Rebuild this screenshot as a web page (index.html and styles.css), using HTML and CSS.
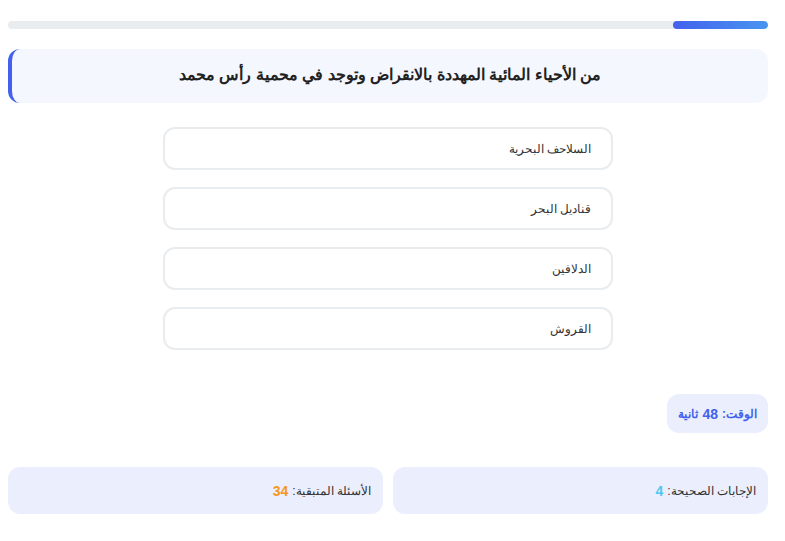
FILE: index.html
```html
<!DOCTYPE html>
<html lang="ar" dir="rtl">
<head>
<meta charset="utf-8">
<title>اختبار</title>
<link rel="stylesheet" href="styles.css">
</head>
<body>
<div class="quiz">
  <div class="progress"><div class="progress-fill" style="width:12.5%"></div></div>
  <div class="question">من الأحياء المائية المهددة بالانقراض وتوجد في محمية رأس محمد</div>
  <div class="options">
    <div class="option">السلاحف البحرية</div>
    <div class="option">قناديل البحر</div>
    <div class="option">الدلافين</div>
    <div class="option">القروش</div>
  </div>
  <div class="timer-row">
    <div class="timer">الوقت: <span>48</span> ثانية</div>
  </div>
  <div class="stats">
    <div class="stat">الإجابات الصحيحة: <span class="correct">4</span></div>
    <div class="stat">الأسئلة المتبقية: <span class="remaining">34</span></div>
  </div>
</div>
</body>
</html>
```

FILE: styles.css
```css
html, body {
  margin: 0;
  padding: 0;
  background: #ffffff;
}
body {
  font-family: "Liberation Sans", sans-serif;
  color: #333333;
}
.quiz {
  margin: 0 17px 0 8px;
  padding-top: 21px;
}
.progress {
  height: 8px;
  border-radius: 4px;
  background: #e9ecef;
  overflow: hidden;
  margin-bottom: 20px;
  direction: ltr;
  display: flex;
  justify-content: flex-end;
}
.progress-fill {
  height: 100%;
  border-radius: 4px;
  background: linear-gradient(to right, #4361ee, #4895ef);
}
.question {
  height: 54px;
  box-sizing: border-box;
  padding-bottom: 3px;
  display: flex;
  align-items: center;
  justify-content: center;
  background: #f4f7fe;
  border-left: 4px solid #4361ee;
  border-radius: 12px;
  font-size: 16px;
  font-weight: bold;
  color: #222222;
  margin-bottom: 24px;
}
.options {
  width: 450px;
  margin: 0 auto;
  display: flex;
  flex-direction: column;
  gap: 17px;
}
.option {
  height: 43px;
  box-sizing: border-box;
  border: 2px solid #e9ecef;
  border-radius: 12px;
  padding: 0 20px;
  display: flex;
  align-items: center;
  font-size: 12px;
  color: #333333;
  background: #ffffff;
}
.timer-row {
  display: flex;
  margin-top: 44px;
}
.timer {
  height: 39px;
  box-sizing: border-box;
  padding: 0 11px;
  display: flex;
  align-items: center;
  gap: 4px;
  background: #eaeefd;
  border-radius: 12px;
  color: #4361ee;
  font-weight: bold;
  font-size: 12px;
}
.timer span {
  font-size: 14px;
}
.stats {
  display: grid;
  grid-template-columns: 1fr 1fr;
  gap: 10px;
  margin-top: 34px;
}
.stat {
  height: 47px;
  box-sizing: border-box;
  padding: 0 12px;
  display: flex;
  align-items: center;
  gap: 4px;
  background: #ebeefc;
  border-radius: 12px;
  font-size: 12px;
  color: #333333;
}
.stat span {
  font-weight: bold;
  font-size: 14px;
}
.correct {
  color: #4cc9f0;
}
.remaining {
  color: #f8961e;
}
```
